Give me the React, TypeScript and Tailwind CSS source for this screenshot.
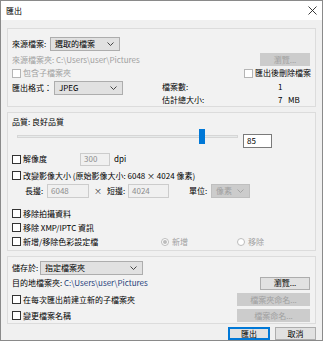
import React from "react";

const F = { fontFamily: '"Noto Sans CJK TC", "Noto Sans", sans-serif' };

function Chevron({ color = "#333" }: { color?: string }) {
  return (
    <svg width="7" height="4" viewBox="0 0 7 4" className="shrink-0">
      <path d="M0.5 0.5 L3.5 3.5 L6.5 0.5" fill="none" stroke={color} strokeWidth="0.9" />
    </svg>
  );
}

function Select({ w, text, disabled = false, h = 14 }: { w: number; text: string; disabled?: boolean; h?: number }) {
  return (
    <div
      className={`flex items-center justify-between pl-[4px] pr-[5px] border ${disabled ? "bg-[#cccccc] border-[#bfbfbf] text-[#a0a0a0]" : "bg-[#e1e1e1] border-[#adadad] text-black"}`}
      style={{ width: w, height: h }}
    >
      <span className="leading-none">{text}</span>
      <Chevron color={disabled ? "#a0a0a0" : "#333"} />
    </div>
  );
}

function Check({ label, disabled = false, lightBox = false }: { label: string; disabled?: boolean; lightBox?: boolean }) {
  return (
    <div className="flex items-center">
      <div className={`w-[9px] h-[9px] border bg-white ${disabled || lightBox ? "border-[#b5b5b5]" : "border-[#333333]"}`} />
      <span className={`ml-[2px] leading-none ${disabled ? "text-[#a0a0a0]" : "text-black"}`}>{label}</span>
    </div>
  );
}

function Btn({ w, text, disabled = false, primary = false }: { w: number; text: string; disabled?: boolean; primary?: boolean }) {
  return (
    <div
      className={`flex items-center justify-center h-[13px] leading-none ${
        disabled
          ? "bg-[#cccccc] border border-[#cccccc] text-[#a0a0a0]"
          : primary
          ? "bg-[#e1e1e1] border-2 border-[#0078d7] text-black"
          : "bg-[#e1e1e1] border border-[#adadad] text-black"
      }`}
      style={{ width: w }}
    >
      {text}
    </div>
  );
}

function Input({ w, text, disabled = false, h = 13 }: { w: number; text: string; disabled?: boolean; h?: number }) {
  return (
    <div
      className={`flex items-center pl-[3px] leading-none border ${disabled ? "bg-[#f0f0f0] border-[#cccccc] text-[#8d8d8d]" : "bg-white border-[#7a7a7a] text-black"}`}
      style={{ width: w, height: h }}
    >
      {text}
    </div>
  );
}

function Radio({ label, checked = false }: { label: string; checked?: boolean }) {
  return (
    <div className="flex items-center text-[#a0a0a0]">
      <div className="w-[8px] h-[8px] rounded-full border border-[#bcbcbc] bg-white flex items-center justify-center">
        {checked && <div className="w-[4px] h-[4px] rounded-full bg-[#bcbcbc]" />}
      </div>
      <span className="ml-[3px] leading-none">{label}</span>
    </div>
  );
}

export default function App() {
  return (
    <div className="w-[323px] h-[341px] bg-[#f0f0f0] border border-[#8a8a8a] flex flex-col text-[8px] text-black overflow-hidden" style={F}>
      {/* title bar */}
      <div className="h-[19px] bg-white flex items-center justify-between pl-[5px] pr-[5px] shrink-0">
        <span className="text-[8px] leading-none">匯出</span>
        <svg width="9" height="9" viewBox="0 0 9 9">
          <path d="M0.5 0.5 L8.5 8.5 M8.5 0.5 L0.5 8.5" stroke="#222" strokeWidth="0.9" />
        </svg>
      </div>

      <div className="flex flex-col px-[6px] pt-[8px]">
        {/* Panel 1 */}
        <div className="h-[79px] border border-[#dcdcdc] bg-[#f2f2f2] flex flex-col pl-[4px] pr-[5px] pt-[8px]">
          <div className="flex items-center h-[14px]">
            <span className="w-[38px] leading-none">來源檔案:</span>
            <Select w={70} text="選取的檔案" />
          </div>
          <div className="flex items-center justify-between h-[17px]">
            <span className="text-[#a0a0a0] leading-none">來源檔案夾: C:\Users\user\Pictures</span>
            <Btn w={50} text="瀏覽..." disabled />
          </div>
          <div className="flex items-center justify-between h-[10px]">
            <Check label="包含子檔案夾" disabled />
            <div className="mr-[-1px]">
              <Check label="匯出後刪除檔案" lightBox />
            </div>
          </div>
          <div className="flex mt-[3px]">
            <div className="w-[150px] flex items-center h-[14px]">
              <span className="w-[42px] leading-none">匯出格式：</span>
              <Select w={69} text="JPEG" />
            </div>
            <div className="flex flex-col">
              <div className="flex h-[12px] items-center">
                <span className="w-[116px] leading-none">檔案數:</span>
                <span className="leading-none">1</span>
              </div>
              <div className="flex h-[13px] items-center">
                <span className="w-[116px] leading-none">估計總大小:</span>
                <span className="leading-none w-[10px]">7</span>
                <span className="leading-none">MB</span>
              </div>
            </div>
          </div>
        </div>

        {/* Panel 2 */}
        <div className="mt-[5px] h-[139px] border border-[#dcdcdc] bg-[#f2f2f2] flex flex-col pl-[4px] pr-[5px] pt-[4px]">
          <div className="h-[10px] flex items-center leading-none">品質: 良好品質</div>
          <div className="flex items-start h-[22px] mt-[2px]">
            <div className="relative w-[221px] h-[15px] ml-[5px]">
              <div className="absolute left-0 right-0 top-[6px] h-[3px] bg-[#e7eaea] border border-[#d6d6d6]" />
              <div className="absolute left-[182px] top-0 w-[6px] h-[15px] bg-[#0078d7]" />
            </div>
            <div className="ml-[5px] mt-[5px]">
              <Input w={29} h={14} text="85" />
            </div>
          </div>
          <div className="flex items-center h-[14px] mt-[1px]">
            <div className="w-[68px]">
              <Check label="解像度" />
            </div>
            <Input w={30} h={13} text="300" disabled />
            <span className="ml-[4px] leading-none">dpi</span>
          </div>
          <div className="flex items-center h-[15px] mt-[2px]">
            <Check label="改變影像大小 (原始影像大小: 6048 × 4024 像素)" />
          </div>
          <div className="flex items-center h-[15px] pl-[13px]">
            <span className="w-[22px] leading-none">長邊:</span>
            <Input w={42} h={14} text="6048" disabled />
            <span className="w-[18px] text-center leading-none text-[#333]">×</span>
            <span className="w-[21px] leading-none">短邊:</span>
            <Input w={41} h={14} text="4024" disabled />
            <span className="ml-[20px] w-[22px] leading-none">單位:</span>
            <Select w={39} h={14} text="像素" disabled />
          </div>
          <div className="flex flex-col mt-[11px] gap-[5px]">
            <div className="h-[9px] flex items-center">
              <Check label="移除拍攝資料" />
            </div>
            <div className="h-[9px] flex items-center">
              <Check label="移除 XMP/IPTC 資訊" />
            </div>
            <div className="h-[9px] flex items-center">
              <div className="w-[149px]">
                <Check label="新增/移除色彩設定檔" />
              </div>
              <div className="w-[76px]">
                <Radio label="新增" checked />
              </div>
              <Radio label="移除" />
            </div>
          </div>
        </div>

        {/* Panel 3 */}
        <div className="mt-[5px] h-[68px] border border-[#dcdcdc] bg-[#f2f2f2] flex flex-col pl-[4px] pr-[5px] pt-[4px]">
          <div className="flex items-center h-[14px]">
            <span className="w-[28px] leading-none">儲存於:</span>
            <Select w={103} h={14} text="指定檔案夾" />
          </div>
          <div className="flex items-center justify-between h-[14px] mt-[1px]">
            <span className="leading-none">
              目的地檔案夾: <span className="text-[#1f3f7a]">C:\Users\user\Pictures</span>
            </span>
            <Btn w={50} text="瀏覽..." />
          </div>
          <div className="flex items-center justify-between h-[15px] mt-[2px]">
            <Check label="在每次匯出前建立新的子檔案夾" />
            <Btn w={73} text="檔案夾命名..." disabled />
          </div>
          <div className="flex items-center justify-between h-[15px] mt-[1px]">
            <Check label="變更檔案名稱" />
            <Btn w={73} text="檔案命名..." disabled />
          </div>
        </div>

        <div className="flex justify-end gap-[5px] mt-[3px]">
          <Btn w={42} text="匯出" primary />
          <Btn w={41} text="取消" />
        </div>
      </div>
    </div>
  );
}
